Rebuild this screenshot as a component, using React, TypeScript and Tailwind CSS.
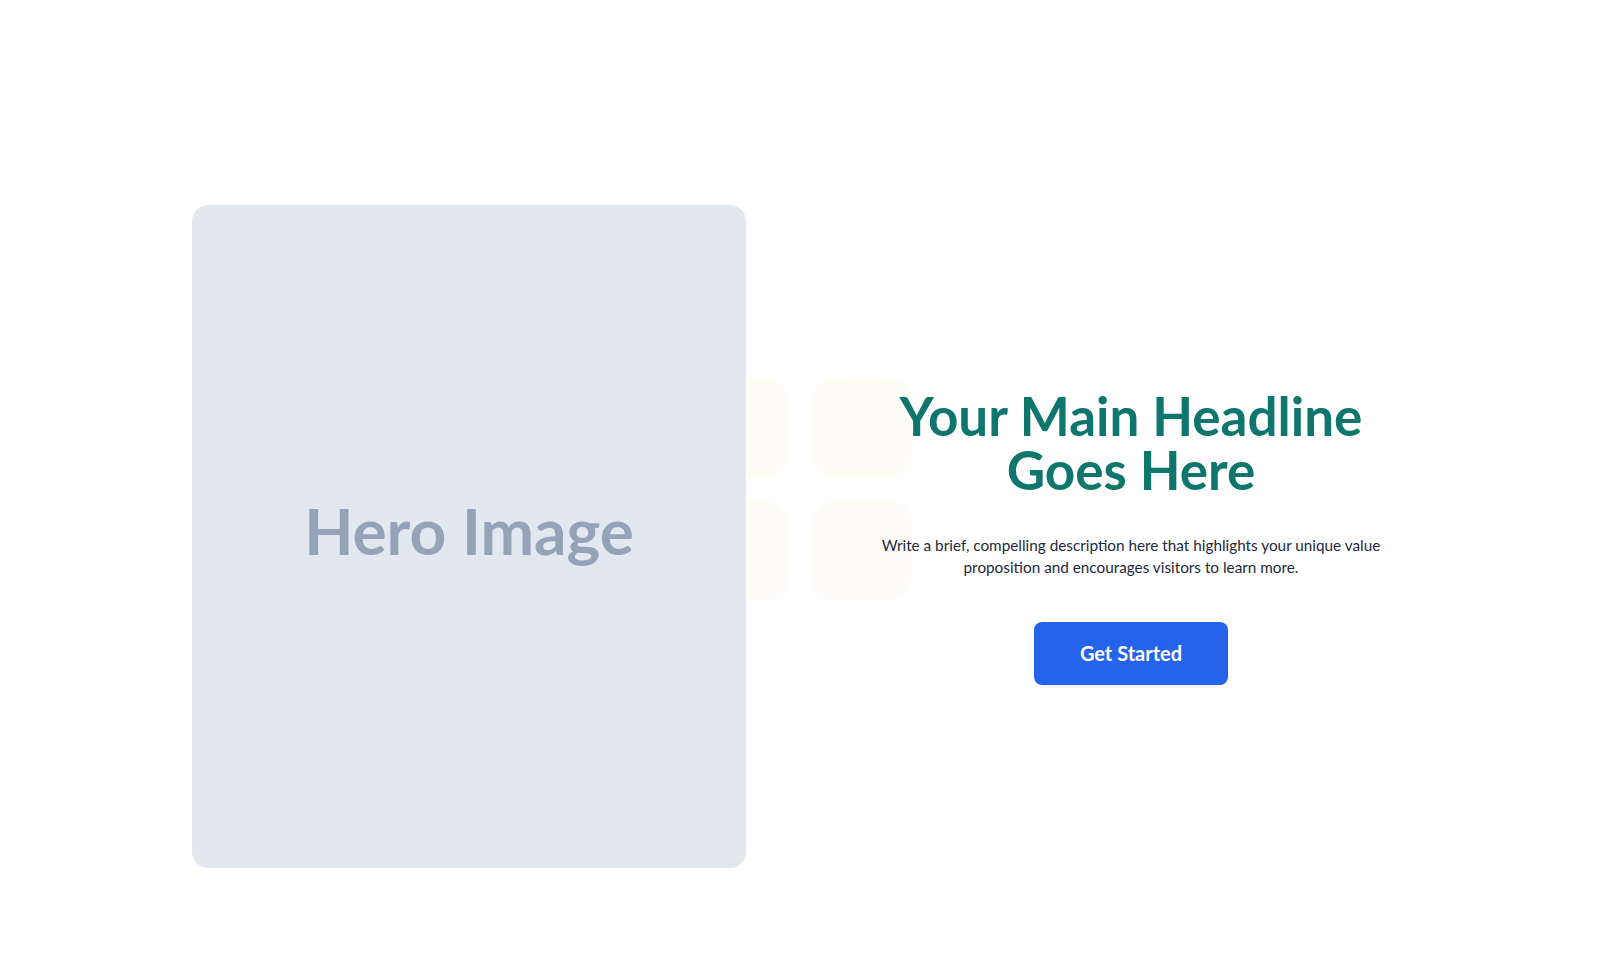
import React from 'react';

const App: React.FC = () => {
  return (
    <section className="relative min-h-screen bg-white overflow-hidden">
      {/* decorative tiles behind the hero */}
      <div className="absolute top-1/2 left-1/2 -translate-x-1/2 -translate-y-1/2 grid grid-cols-2 gap-[23px]">
        <div className="w-[100px] h-[100px] rounded-3xl bg-[#fdfcf5]"></div>
        <div className="w-[100px] h-[100px] rounded-3xl bg-[#fdfcf5]"></div>
        <div className="w-[100px] h-[100px] rounded-3xl bg-[#fdfcf5]"></div>
        <div className="w-[100px] h-[100px] rounded-3xl bg-[#fdfcf5]"></div>
      </div>

      <div className="relative z-10 max-w-7xl mx-auto px-8 pt-[205px] pb-[110px] grid grid-cols-[554px_1fr] gap-[108px] items-center">
        <div className="h-[663px] rounded-2xl bg-[#e2e8f0] flex items-center justify-center">
          <span className="text-[64px] font-bold text-[#94a3b8] font-['Lato',sans-serif] -mt-3">Hero Image</span>
        </div>

        <div className="flex flex-col items-center text-center font-['Lato',sans-serif]">
          <h1 className="text-[53px] leading-[54px] font-bold text-[#0f766e]">
            Your Main Headline<br />Goes Here
          </h1>
          <p className="mt-[37px] max-w-lg text-[15.3px] leading-[22px] text-[#1e293b]">
            Write a brief, compelling description here that highlights your unique value proposition and encourages visitors to learn more.
          </p>
          <button className="mt-11 w-[194px] h-[63px] rounded-lg bg-[#2563eb] text-white text-xl font-bold">
            Get Started
          </button>
        </div>
      </div>
    </section>
  );
};

export default App;
